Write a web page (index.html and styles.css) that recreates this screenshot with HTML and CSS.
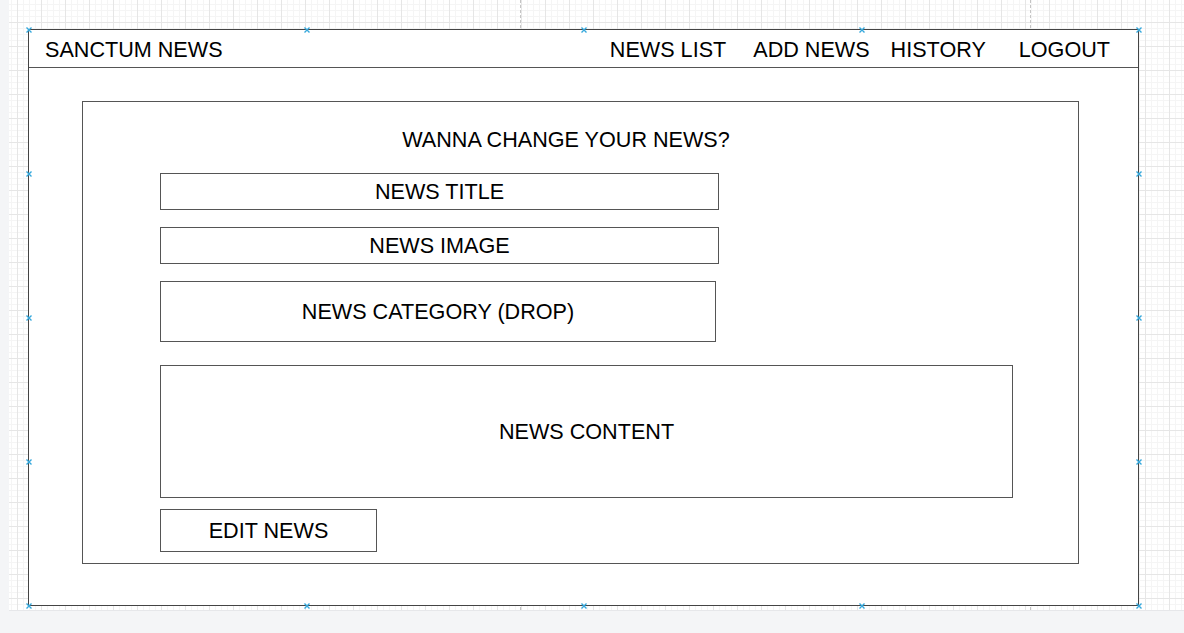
FILE: index.html
```html
<!DOCTYPE html>
<html>
<head>
<meta charset="utf-8">
<title>Sanctum News - Edit</title>
<link rel="stylesheet" href="styles.css">
</head>
<body>
<div class="canvas">
  <div class="pagebreak pb1"></div>
  <div class="pagebreak pb2"></div>
  <div class="frame">
    <header class="header">
      <div class="brand">SANCTUM NEWS</div>
      <nav class="nav">
        <span class="nav-item">NEWS LIST</span>
        <span class="nav-item">ADD NEWS</span>
        <span class="nav-item">HISTORY</span>
        <span class="nav-item">LOGOUT</span>
      </nav>
    </header>
    <main class="main">
      <section class="panel">
        <h1 class="heading">WANNA CHANGE YOUR NEWS?</h1>
        <div class="field f-title">NEWS TITLE</div>
        <div class="field f-image">NEWS IMAGE</div>
        <div class="field f-category">NEWS CATEGORY (DROP)</div>
        <div class="field f-content">NEWS CONTENT</div>
        <div class="field f-edit">EDIT NEWS</div>
      </section>
    </main>

    <svg class="handle hx0 hy0" viewBox="0 0 7 7"><path d="M1 1L6 6M6 1L1 6"/></svg>
    <svg class="handle hx1 hy0" viewBox="0 0 7 7"><path d="M1 1L6 6M6 1L1 6"/></svg>
    <svg class="handle hx2 hy0" viewBox="0 0 7 7"><path d="M1 1L6 6M6 1L1 6"/></svg>
    <svg class="handle hx3 hy0" viewBox="0 0 7 7"><path d="M1 1L6 6M6 1L1 6"/></svg>
    <svg class="handle hx4 hy0" viewBox="0 0 7 7"><path d="M1 1L6 6M6 1L1 6"/></svg>
    <svg class="handle hx0 hy1" viewBox="0 0 7 7"><path d="M1 1L6 6M6 1L1 6"/></svg>
    <svg class="handle hx4 hy1" viewBox="0 0 7 7"><path d="M1 1L6 6M6 1L1 6"/></svg>
    <svg class="handle hx0 hy2" viewBox="0 0 7 7"><path d="M1 1L6 6M6 1L1 6"/></svg>
    <svg class="handle hx4 hy2" viewBox="0 0 7 7"><path d="M1 1L6 6M6 1L1 6"/></svg>
    <svg class="handle hx0 hy3" viewBox="0 0 7 7"><path d="M1 1L6 6M6 1L1 6"/></svg>
    <svg class="handle hx4 hy3" viewBox="0 0 7 7"><path d="M1 1L6 6M6 1L1 6"/></svg>
    <svg class="handle hx0 hy4" viewBox="0 0 7 7"><path d="M1 1L6 6M6 1L1 6"/></svg>
    <svg class="handle hx1 hy4" viewBox="0 0 7 7"><path d="M1 1L6 6M6 1L1 6"/></svg>
    <svg class="handle hx2 hy4" viewBox="0 0 7 7"><path d="M1 1L6 6M6 1L1 6"/></svg>
    <svg class="handle hx3 hy4" viewBox="0 0 7 7"><path d="M1 1L6 6M6 1L1 6"/></svg>
    <svg class="handle hx4 hy4" viewBox="0 0 7 7"><path d="M1 1L6 6M6 1L1 6"/></svg>
  </div>
</div>
</body>
</html>
```
FILE: styles.css
```css
* { box-sizing: border-box; }

html, body {
  margin: 0;
  padding: 0;
}

body {
  background: #f4f5f7;
  font-family: "Liberation Sans", Arial, Helvetica, sans-serif;
  color: #000;
  font-size: 21.6px;
  overflow: hidden;
}

.canvas {
  position: relative;
  margin-left: 9px;
  height: 611px;
  padding-top: 29px;
  padding-left: 19px;
  background-color: #ffffff;
  background-image:
    linear-gradient(to right, #e6e6e6 1px, transparent 1px),
    linear-gradient(to bottom, #e6e6e6 1px, transparent 1px),
    linear-gradient(to right, #f5f5f5 1px, transparent 1px),
    linear-gradient(to bottom, #f5f5f5 1px, transparent 1px);
  background-size: 24px 24px, 24px 24px, 6px 6px, 6px 6px;
  background-position: 8px 22px, 8px 22px, 2px 4px, 2px 4px;
  border-bottom: 1px solid #e6e7ea;
}

.pagebreak {
  position: absolute;
  top: 0;
  bottom: 0;
  width: 0;
  border-left: 1px dashed #c4c4c4;
}
.pb1 { left: 511px; }
.pb2 { left: 1021px; }

.frame {
  position: relative;
  width: 1111px;
  height: 577px;
  border: 1px solid #444;
  background: #fff;
  display: flex;
  flex-direction: column;
}

.header {
  height: 38px;
  flex: none;
  display: flex;
  align-items: center;
  justify-content: space-between;
  padding: 3px 28px 0 16px;
  border-bottom: 1px solid #555;
  white-space: nowrap;
}

.nav {
  display: flex;
}
.nav-item:nth-child(2) { margin-left: 27px; }
.nav-item:nth-child(3) { margin-left: 21px; }
.nav-item:nth-child(4) { margin-left: 33px; }

.main {
  padding: 33px 0 0 53px;
}

.panel {
  width: 997px;
  height: 463px;
  border: 1px solid #555;
  padding-left: 77px;
  display: flex;
  flex-direction: column;
  align-items: flex-start;
}

.heading {
  align-self: stretch;
  margin: 26px 106px 0 0;
  font-size: 21.6px;
  font-weight: normal;
  line-height: 24px;
  text-align: center;
}

.field {
  display: flex;
  align-items: center;
  justify-content: center;
  border: 1px solid #555;
  white-space: nowrap;
  padding-top: 1px;
}
.f-title { width: 559px; height: 37px; margin-top: 21px; }
.f-image { width: 559px; height: 37px; margin-top: 17px; }
.f-category { width: 556px; height: 61px; margin-top: 17px; }
.f-content { width: 853px; height: 133px; margin-top: 23px; }
.f-edit { width: 217px; height: 43px; margin-top: 11px; }

.handle {
  position: absolute;
  width: 7px;
  height: 7px;
  transform: translate(-50%, -50%);
  fill: none;
  stroke: #35a8dc;
  stroke-width: 1.4;
}
.hx0 { left: -0.5px; }
.hx1 { left: 277.5px; }
.hx2 { left: 554.5px; }
.hx3 { left: 832.5px; }
.hx4 { left: 1109.5px; }
.hy0 { top: -0.5px; }
.hy1 { top: 143.5px; }
.hy2 { top: 287.5px; }
.hy3 { top: 431.5px; }
.hy4 { top: 575.5px; }
```
